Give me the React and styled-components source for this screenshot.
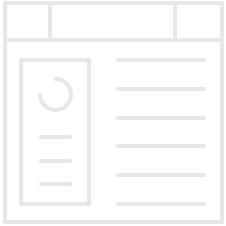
import React from "react";
import styled, { createGlobalStyle } from "styled-components";

const C = "#e7e7e7";

const Global = createGlobalStyle`
  html, body { margin: 0; padding: 0; background: #ffffff; }
  body { font-family: "Liberation Sans", Arial, sans-serif; }
`;

const Frame = styled.div`
  box-sizing: border-box;
  margin: 1px 0 0 3px;
  width: 221px;
  height: 223px;
  border: 4px solid ${C};
  display: flex;
  flex-direction: column;
`;

const Header = styled.div`
  display: flex;
  height: 37px;
  flex-shrink: 0;
  border-bottom: 4px solid ${C};
  box-sizing: border-box;
`;

const Cell = styled.div`
  width: ${(p) => p.$w}px;
  flex-shrink: 0;
  box-sizing: border-box;
  border-right: ${(p) => (p.$divider ? `4px solid ${C}` : "none")};
`;

const Body = styled.div`
  flex: 1;
  display: flex;
  padding: 16px 14px 14px 12px;
  gap: 25px;
`;

const Sidebar = styled.div`
  box-sizing: border-box;
  width: 72px;
  border: 4px solid ${C};
  border-radius: 2px;
  display: flex;
  flex-direction: column;
  align-items: center;
  padding-top: 15px;
`;

const Ring = styled.svg`
  display: block;
  margin-left: 0px;
`;

const SideLines = styled.div`
  display: flex;
  flex-direction: column;
  gap: 19.5px;
  margin-top: 23px;
`;

const Bar = styled.div`
  width: ${(p) => p.$w}px;
  height: 4px;
  border-radius: 2px;
  background: ${C};
`;

const Lines = styled.div`
  display: flex;
  flex-direction: column;
  gap: 24.8px;
`;

export default function App() {
  return (
    <>
      <Global />
      <Frame>
        <Header>
          <Cell $w={45} $divider />
          <Cell $w={125} $divider />
          <Cell $w={43} />
        </Header>
        <Body>
          <Sidebar>
            <Ring width="35" height="35" viewBox="0 0 35 35">
              <path
                d="M17.5 2 A15.5 15.5 0 1 1 2 17.5"
                fill="none"
                stroke={C}
                strokeWidth="4"
                strokeLinecap="round"
              />
            </Ring>
            <SideLines>
              <Bar $w={33} />
              <Bar $w={33} />
              <Bar $w={33} />
            </SideLines>
          </Sidebar>
          <Lines>
            {[0, 1, 2, 3, 4, 5].map((i) => (
              <Bar key={i} $w={90} />
            ))}
          </Lines>
        </Body>
      </Frame>
    </>
  );
}
